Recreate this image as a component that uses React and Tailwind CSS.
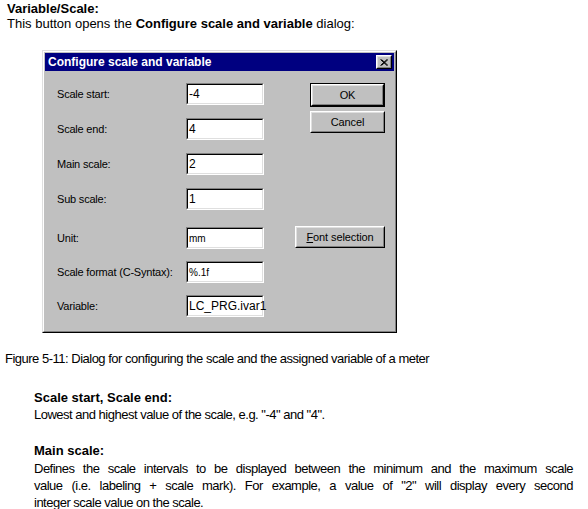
import React from 'react';

const rows = [
  { label: 'Scale start:', value: '-4', mt: 'mt-[12px]', big: true },
  { label: 'Scale end:', value: '4', mt: 'mt-[13px]', big: true },
  { label: 'Main scale:', value: '2', mt: 'mt-[13px]', big: true },
  { label: 'Sub scale:', value: '1', mt: 'mt-[13px]', big: true },
  { label: 'Unit:', value: 'mm', mt: 'mt-[17px]', big: false },
  { label: 'Scale format (C-Syntax):', value: '%.1f', mt: 'mt-[12px]', big: false },
  { label: 'Variable:', value: 'LC_PRG.ivar1', mt: 'mt-[12px]', big: true },
];

const mainScaleLines = [
  'Defines the scale intervals to be displayed between the minimum and the maximum scale',
  'value (i.e. labeling + scale mark). For example, a value of "2" will display every second',
];

function Field({ value, big }) {
  // sunken win95 edit box
  return (
    <div className="w-[78px] h-[22px] border border-t-[#808080] border-l-[#808080] border-r-white border-b-white">
      <div className={`h-full bg-white border border-t-black border-l-black border-r-[#dfdfdf] border-b-[#dfdfdf] pl-[1px] flex items-center ${big ? 'text-[12px]' : 'text-[10px]'}`}>
        {value}
      </div>
    </div>
  );
}

function Button({ children, className = '', isDefault = false }) {
  const inner = (
    <div className="h-full border border-t-white border-l-white border-r-black border-b-black">
      <div className="h-full border border-t-[#dfdfdf] border-l-[#dfdfdf] border-r-[#808080] border-b-[#808080] flex items-center justify-center text-[11px] tracking-[-0.1px]">
        {children}
      </div>
    </div>
  );
  if (isDefault) {
    return <div className={`border border-black ${className}`}>{inner}</div>;
  }
  return <div className={className}>{inner}</div>;
}

export default function App() {
  return (
    <div
      className="w-[588px] h-[509px] bg-white text-black overflow-hidden"
      style={{ fontFamily: '"Liberation Sans", Arial, sans-serif' }}
    >
      {/* intro */}
      <div className="pl-[7px] pt-[1px] text-[13px] leading-[15px]">
        <div className="font-bold">Variable/Scale:</div>
        <div>
          This button opens the <span className="font-bold">Configure scale and variable</span> dialog:
        </div>
      </div>

      {/* dialog */}
      <div className="ml-[42px] mt-[19px] w-[355px] h-[283px] bg-[#c0c0c0] border border-t-[#dfdfdf] border-l-[#dfdfdf] border-r-black border-b-black">
        <div className="h-full border border-t-white border-l-white border-r-[#808080] border-b-[#808080] p-[1px] flex flex-col">
          <div className="h-[18px] bg-[#000080] flex items-center justify-between pl-[3px] pr-[2px]">
            <span className="text-white font-bold text-[12px]">Configure scale and variable</span>
            <div className="w-[16px] h-[14px] border border-t-white border-l-white border-r-black border-b-black">
              <div className="h-full bg-[#c0c0c0] border border-t-[#dfdfdf] border-l-[#dfdfdf] border-r-[#808080] border-b-[#808080] flex items-center justify-center">
                <svg width="8" height="7" viewBox="0 0 8 7">
                  <path d="M0.5 0.5 L7 6.5 M1.5 0.5 L8 6.5 M7 0.5 L0.5 6.5 M8 0.5 L1.5 6.5" stroke="black" strokeWidth="1" />
                </svg>
              </div>
            </div>
          </div>

          <div className="flex text-[11px]">
            <div className="pl-[12px] flex flex-col">
              {rows.map(r => (
                <div key={r.label} className={`flex items-center ${r.mt}`}>
                  <span className="w-[129px] tracking-[-0.2px]">{r.label}</span>
                  <Field value={r.value} big={r.big} />
                </div>
              ))}
            </div>
            <div className="ml-[31px] w-[90px] flex flex-col">
              <Button isDefault className="ml-[15px] mt-[12px] w-[75px] h-[24px]">OK</Button>
              <Button className="ml-[15px] mt-[4px] w-[75px] h-[22px]">Cancel</Button>
              <Button className="mt-[93px] w-[90px] h-[22px]">
                <span><span className="underline">F</span>ont selection</span>
              </Button>
            </div>
          </div>
        </div>
      </div>

      {/* caption */}
      <div className="pl-[5px] mt-[18px] text-[13px] leading-[15px] tracking-[-0.5px]">
        Figure 5-11: Dialog for configuring the scale and the assigned variable of a meter
      </div>

      <div className="pl-[34px] w-[573px] mt-[23px] text-[13px] leading-[17px]">
        <div className="font-bold">Scale start, Scale end:</div>
        <div className="tracking-[-0.5px]">Lowest and highest value of the scale, e.g. "-4" and "4".</div>
        <div className="font-bold mt-[19px]">Main scale:</div>
        <div className="mt-[1px] leading-[17px] tracking-[-0.5px]">
          {mainScaleLines.map(l => (
            <div key={l} className="text-justify [text-align-last:justify]">{l}</div>
          ))}
          <div>integer scale value on the scale.</div>
        </div>
      </div>
    </div>
  );
}
